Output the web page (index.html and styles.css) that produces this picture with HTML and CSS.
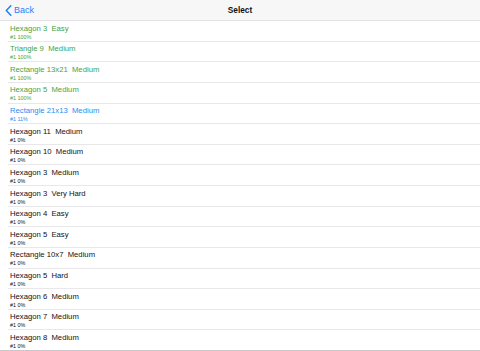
FILE: index.html
```html
<html>
    <head>
        <meta charset="utf-8">
        <title>Select</title>
        <link rel="stylesheet" href="styles.css">
    </head>
    <body>
        <div class="navbar">
            <div class="back">
                <svg class="chevron" width="7" height="11" viewBox="0 0 7 11">
                    <path d="M5.8 0.8 L1.3 5.5 L5.8 10.2" fill="none" stroke="#1a82fb" stroke-width="1.5" stroke-linecap="round" stroke-linejoin="round"/>
                </svg>
                <span>Back</span>
            </div>
            <div class="title">Select</div>
            <div class="spacer"></div>
        </div>

        <div class="list">
            <div class="cell done">
                <div class="name">Hexagon 3&nbsp; Easy</div>
                <div class="sub">#1 100%</div>
            </div>
            <div class="cell done">
                <div class="name">Triangle 9&nbsp; Medium</div>
                <div class="sub">#1 100%</div>
            </div>
            <div class="cell done">
                <div class="name">Rectangle 13x21&nbsp; Medium</div>
                <div class="sub">#1 100%</div>
            </div>
            <div class="cell done">
                <div class="name">Hexagon 5&nbsp; Medium</div>
                <div class="sub">#1 100%</div>
            </div>
            <div class="cell started">
                <div class="name">Rectangle 21x13&nbsp; Medium</div>
                <div class="sub">#1 11%</div>
            </div>
            <div class="cell">
                <div class="name">Hexagon 11&nbsp; Medium</div>
                <div class="sub">#1 0%</div>
            </div>
            <div class="cell">
                <div class="name">Hexagon 10&nbsp; Medium</div>
                <div class="sub">#1 0%</div>
            </div>
            <div class="cell">
                <div class="name">Hexagon 3&nbsp; Medium</div>
                <div class="sub">#1 0%</div>
            </div>
            <div class="cell">
                <div class="name">Hexagon 3&nbsp; Very Hard</div>
                <div class="sub">#1 0%</div>
            </div>
            <div class="cell">
                <div class="name">Hexagon 4&nbsp; Easy</div>
                <div class="sub">#1 0%</div>
            </div>
            <div class="cell">
                <div class="name">Hexagon 5&nbsp; Easy</div>
                <div class="sub">#1 0%</div>
            </div>
            <div class="cell">
                <div class="name">Rectangle 10x7&nbsp; Medium</div>
                <div class="sub">#1 0%</div>
            </div>
            <div class="cell">
                <div class="name">Hexagon 5&nbsp; Hard</div>
                <div class="sub">#1 0%</div>
            </div>
            <div class="cell">
                <div class="name">Hexagon 6&nbsp; Medium</div>
                <div class="sub">#1 0%</div>
            </div>
            <div class="cell">
                <div class="name">Hexagon 7&nbsp; Medium</div>
                <div class="sub">#1 0%</div>
            </div>
            <div class="cell last">
                <div class="name">Hexagon 8&nbsp; Medium</div>
                <div class="sub">#1 0%</div>
            </div>
        </div>
    </body>
</html>
```

FILE: styles.css
```css
body {
    margin: 0;
    font-family: "Liberation Sans", Arial, sans-serif;
    background-color: #ffffff;
    color: #111111;
    overflow: hidden;
}

/* top bar */
.navbar {
    height: 20px;
    display: flex;
    align-items: center;
    background-color: #f7f7f8;
    border-bottom: 1px solid #e2e2e4;
}

.back {
    width: 80px;
    display: flex;
    align-items: center;
    padding-left: 5px;
    color: #1a82fb;
    font-size: 9px;
}

.chevron {
    margin-right: 2px;
}

.title {
    flex: 1;
    text-align: center;
    font-size: 8.3px;
    font-weight: bold;
    color: #111111;
}

.spacer {
    width: 85px;
}

/* table rows */
.cell {
    height: 20.625px;
    box-sizing: border-box;
    margin-left: 8px;
    padding: 2.5px 0 0 2px;
    border-bottom: 1px solid #e8e8ea;
}

.cell.last {
    border-bottom: 1px solid #c8c8cc;
    margin-left: 0;
    padding-left: 10px;
}

.name {
    font-size: 7.7px;
    line-height: 10px;
}

.sub {
    font-size: 5.4px;
    line-height: 6px;
}

.done {
    color: #44a444;
}

.started {
    color: #2a8cf5;
}
```
